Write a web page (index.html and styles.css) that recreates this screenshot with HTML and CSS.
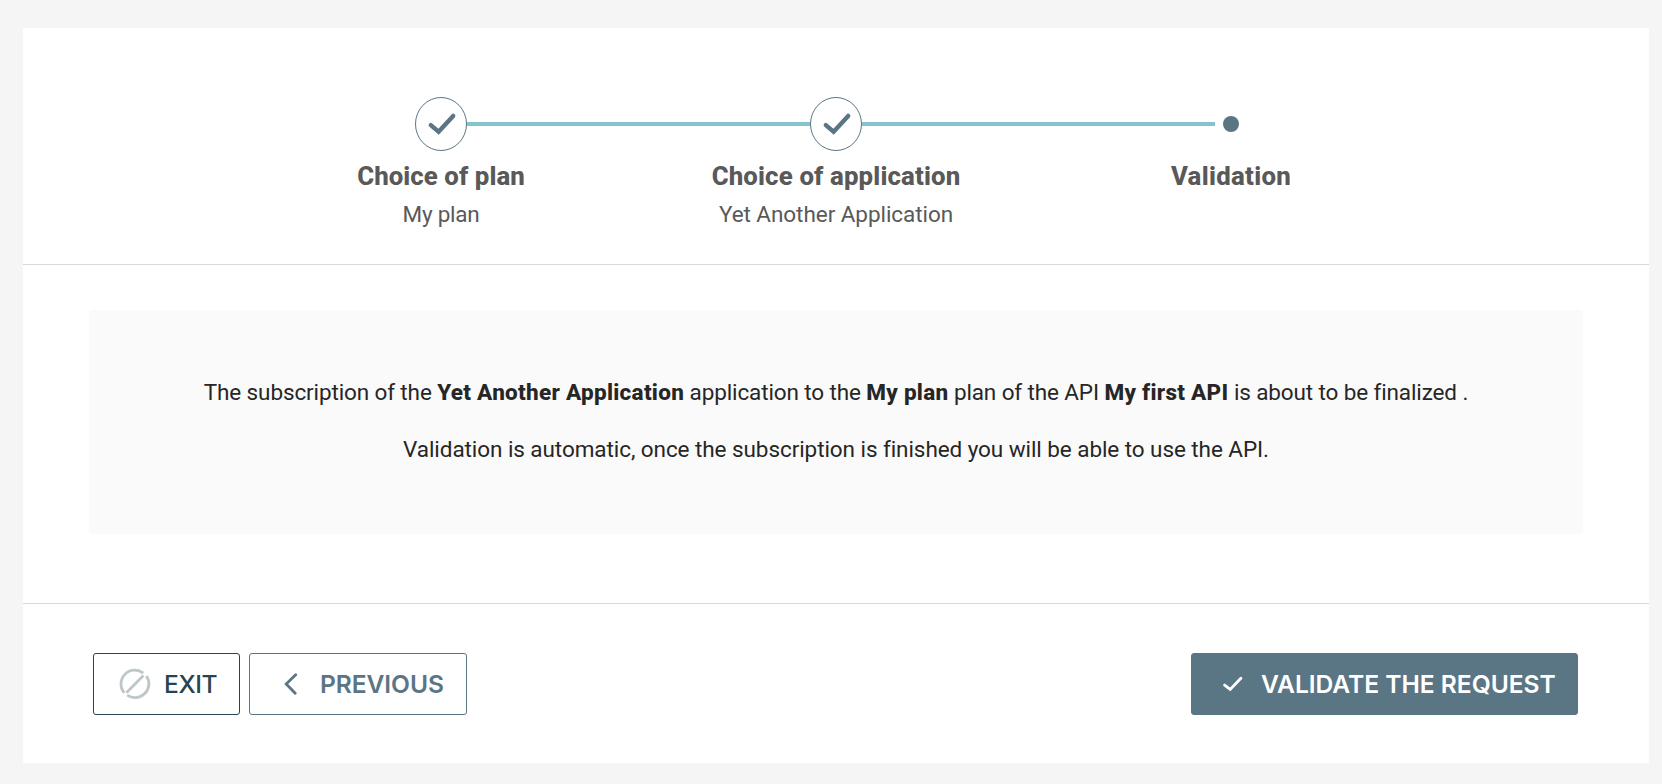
FILE: index.html
```html
<!DOCTYPE html>
<html lang="en">
<head>
<meta charset="utf-8">
<title>Subscription</title>
<link rel="stylesheet" href="styles.css">
</head>
<body>
<main class="card">
  <header class="stepper">
    <section class="step">
      <div class="track">
        <span class="line line-hidden"></span>
        <svg class="marker" viewBox="0 0 52 54"><ellipse cx="26" cy="27" rx="25.5" ry="26.5"/><path d="M15.8 28.1 L23.6 34.7 L38.2 18.9"/></svg>
        <span class="line"></span>
      </div>
      <h2 class="title title-plan">Choice of plan</h2>
      <p class="detail detail-plan">My plan</p>
    </section>
    <section class="step">
      <div class="track">
        <span class="line"></span>
        <svg class="marker" viewBox="0 0 52 54"><ellipse cx="26" cy="27" rx="25.5" ry="26.5"/><path d="M15.8 28.1 L23.6 34.7 L38.2 18.9"/></svg>
        <span class="line"></span>
      </div>
      <h2 class="title title-app">Choice of application</h2>
      <p class="detail">Yet Another Application</p>
    </section>
    <section class="step">
      <div class="track">
        <span class="line"></span>
        <span class="dot"></span>
        <span class="line line-hidden"></span>
      </div>
      <h2 class="title title-validation">Validation</h2>
    </section>
  </header>
  <div class="content">
    <div class="message">
      <p class="summary">The subscription of the <b>Yet Another Application</b> application to the <b>My plan</b> plan of the API <b>My first API</b> is about to be finalized .</p>
      <p class="notice">Validation is automatic, once the subscription is finished you will be able to use the API.</p>
    </div>
  </div>
  <footer class="actions">
    <button class="btn exit" type="button">
      <svg class="icon-exit" viewBox="0 0 32 32"><path d="M5.2 24.8A13.8 13.8 0 0 1 24.3 5.1M27.4 8A13.8 13.8 0 0 1 8.2 27.2M7.4 24.8 24.4 7.6"/></svg>
      <span>EXIT</span>
    </button>
    <button class="btn previous" type="button">
      <svg class="icon-previous" viewBox="0 0 14 22"><path d="M11.7 1.8 2.2 11 11.2 20.3"/></svg>
      <span>PREVIOUS</span>
    </button>
    <button class="btn validate" type="button">
      <svg class="icon-validate" viewBox="0 0 20 16"><path d="M1.6 9.1 7.2 13.4 17.9 2.2"/></svg>
      <span>VALIDATE THE REQUEST</span>
    </button>
  </footer>
</main>
</body>
</html>
```
FILE: styles.css
```css
* { box-sizing: border-box; }
body {
  margin: 0;
  height: 784px;
  padding: 28px 13px 21px 23px;
  background: #f5f5f5;
  color: #262626;
  font-family: Roboto, "Noto Sans", sans-serif;
}
h2, p { margin: 0; white-space: nowrap; }
.card {
  height: 735px;
  display: flex;
  flex-direction: column;
  background: #fff;
}
.stepper {
  height: 237px;
  padding-top: 69px;
  display: grid;
  grid-template-columns: repeat(3, 395px);
  justify-content: center;
  border-bottom: 1px solid #d9d9d9;
}
.step { display: flex; flex-direction: column; align-items: center; }
.track { width: 100%; height: 54px; display: flex; align-items: center; }
.line { flex: 1; height: 4px; background: #83c4cf; }
.line-hidden { background: none; }
.marker { width: 52px; height: 54px; fill: none; stroke: #5a7684; }
.marker ellipse { stroke-width: 1; }
.marker path { stroke-width: 4.4; stroke-linecap: round; }
.dot { width: 16px; height: 16px; margin: 0 8px; border-radius: 50%; background: #5a7684; }
.title {
  margin-top: 9px;
  font-size: 25.8px;
  line-height: 32px;
  font-weight: 800;
  color: #595959;
}
.title-plan { letter-spacing: 0.06px; }
.title-app { letter-spacing: 0.14px; }
.title-validation { letter-spacing: 0.3px; }
.detail { margin-top: 8px; font-size: 22.5px; line-height: 28px; letter-spacing: -0.06px; color: #595959; }
.detail-plan { letter-spacing: -0.25px; }
.content { height: 338px; padding: 45px 66px 0; }
.message {
  height: 224px;
  padding-top: 68px;
  display: flex;
  flex-direction: column;
  align-items: center;
  gap: 29px;
  border-radius: 3px;
  background: #fafafa;
  font-size: 22.5px;
  line-height: 28px;
}
.summary { letter-spacing: -0.12px; }
.summary b { font-weight: 800; letter-spacing: 0.28px; }
.notice { letter-spacing: -0.07px; }
.actions {
  flex: 1;
  padding: 49px 71px 0 70px;
  display: flex;
  gap: 9px;
  align-items: flex-start;
  border-top: 1px solid #d9d9d9;
}
.btn {
  height: 62px;
  padding: 0;
  display: flex;
  align-items: center;
  border: 1px solid #5a7684;
  border-radius: 3px;
  background: #fff;
  color: #5a7684;
  font: 600 24.6px/30px Inter, sans-serif;
  white-space: nowrap;
}
.btn svg { flex: none; fill: none; stroke: currentColor; stroke-linecap: round; }
.exit { width: 147px; padding-left: 25px; border-color: #28444f; color: #28444f; font-weight: 500; letter-spacing: -0.4px; }
.icon-exit { width: 32px; height: 32px; margin-right: 13px; opacity: .3; stroke-width: 2.8; }
.btn .icon-exit { stroke-linecap: butt; }
.previous { width: 218px; padding-left: 34px; letter-spacing: -0.08px; }
.icon-previous { width: 14px; height: 22px; margin-right: 22px; stroke-width: 2.8; }
.validate { width: 387px; margin-left: auto; padding-left: 31px; background: #5a7684; color: #fff; letter-spacing: -0.03px; }
.icon-validate { width: 20px; height: 16px; margin-right: 18px; stroke-width: 2.8; }
```
